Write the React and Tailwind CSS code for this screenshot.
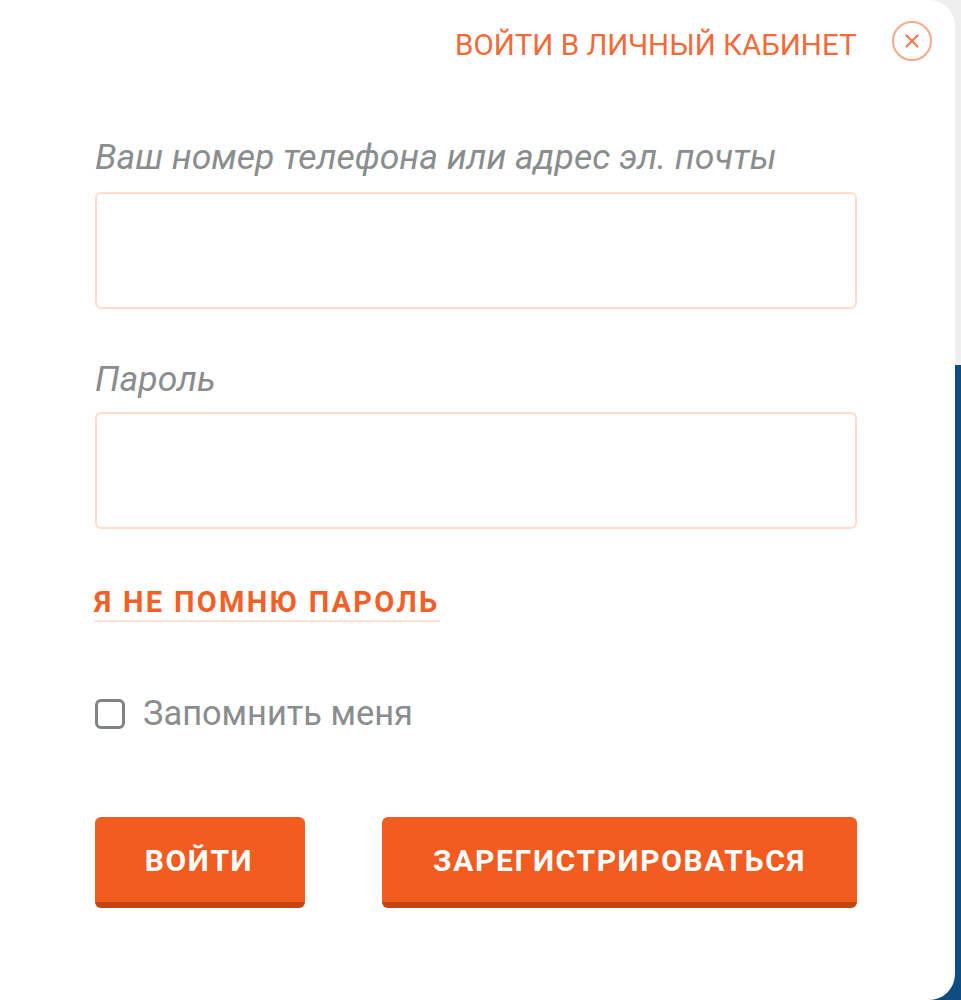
import { X } from 'lucide-react'

function Field({ label, labelClass }) {
  return (
    <div className="flex flex-col">
      <label className={`text-[35.5px] leading-[40px] italic whitespace-nowrap text-[#8a8d8e] ${labelClass}`}>{label}</label>
      <input type="text" className="h-[117px] w-[762px] rounded-[6px] border-2 border-[#fedccd] bg-white outline-none" />
    </div>
  )
}

export default function App() {
  return (
    <div className="h-[1000px] w-[961px] overflow-hidden bg-[linear-gradient(#efefef_365px,#0f4c81_365px)] font-['Roboto',sans-serif]">
      <div className="h-[1000px] w-[955px] rounded-r-[26px] bg-white pl-[95px] pt-[21px]">
        <header className="flex h-[43px] w-[837px] items-start">
          <h1 className="mt-[4px] ml-[360px] w-[401px] text-[29.5px] leading-[40px] whitespace-nowrap text-[#f26a3a]">ВОЙТИ В ЛИЧНЫЙ КАБИНЕТ</h1>
          <button className="ml-[36px] flex h-[40px] w-[40px] items-center justify-center rounded-full border-2 border-[#f6a88c] text-[#f47f55]">
            <X size={22} strokeWidth={2.5} />
          </button>
        </header>

        <form className="mt-[73px] flex flex-col">
          <Field label="Ваш номер телефона или адрес эл. почты" labelClass="mb-[15px]" />
          <div className="mt-[50px]">
            <Field label="Пароль" labelClass="mb-[13px]" />
          </div>

          <a className="mt-[56px] -ml-[1px] w-[346px] border-b-2 border-[#fde0d4] pb-[1px] text-[29px] leading-[34px] font-bold tracking-[2.3px] whitespace-nowrap text-[#f26027]">Я НЕ ПОМНЮ ПАРОЛЬ</a>

          <label className="mt-[72px] flex h-[40px] items-center gap-[18px] text-[34.4px] text-[#8a8d8e]">
            <span className="h-[30px] w-[30px] rounded-[6px] border-[3px] border-[#808385]" />
            Запомнить меня
          </label>

          <div className="mt-[83px] flex w-[762px] justify-between">
            <button type="button" className="h-[91px] w-[210px] rounded-[6px] border-b-[6px] border-[#c44512] bg-[#f25c20] pt-[2px] pr-[2px] text-[30px] font-bold tracking-[1.6px] text-white">ВОЙТИ</button>
            <button type="button" className="h-[91px] w-[475px] rounded-[6px] border-b-[6px] border-[#c44512] bg-[#f25c20] pt-[2px] text-[30px] font-bold tracking-[1.65px] text-white">ЗАРЕГИСТРИРОВАТЬСЯ</button>
          </div>
        </form>
      </div>
    </div>
  )
}
